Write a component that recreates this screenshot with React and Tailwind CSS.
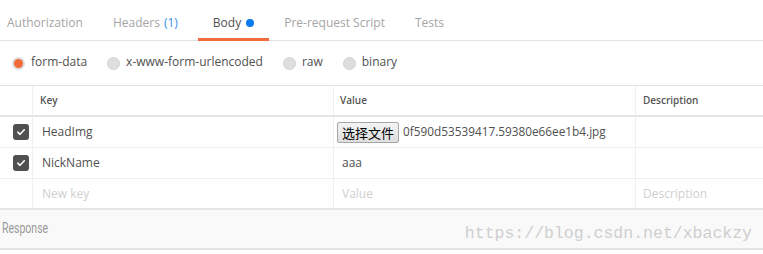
const tabs = [
  { label: 'Authorization', pad: 'pl-[7px] pr-[15px]' },
  { label: 'Headers', count: '(1)', pad: 'pl-[15px] pr-[20px]' },
  { label: 'Body', active: true, dot: true, pad: 'pl-[15px] pr-[15px]' },
  { label: 'Pre-request Script', pad: 'pl-[15px] pr-[15px]' },
  { label: 'Tests', pad: 'pl-[15px] pr-[15px]' },
]

const modes = [
  { label: 'form-data', checked: true },
  { label: 'x-www-form-urlencoded' },
  { label: 'raw' },
  { label: 'binary' },
]

// ── CHECKBOX ──────────────────────────────────────
const Check = () => (
  <span className="w-4 h-4 rounded-[3px] bg-[#505050] flex items-center justify-center">
    <svg width="10" height="10" viewBox="0 0 10 10" fill="none">
      <path d="M1.8 5.2 L4 7.3 L8.3 2.8" stroke="#fff" strokeWidth="1.6" strokeLinecap="round" strokeLinejoin="round" />
    </svg>
  </span>
)

const Radio = ({ checked }) =>
  checked ? (
    <span className="w-[13px] h-[13px] rounded-full bg-[#dcdcdc] flex items-center justify-center">
      <span className="w-[9px] h-[9px] rounded-full bg-[#f26b3a]" />
    </span>
  ) : (
    <span className="w-[13px] h-[13px] rounded-full bg-[#dedede] border border-[#d2d2d2]" />
  )

const Cell = ({ children, className = '' }) => (
  <div className={`flex items-center border-r border-[#f0f0f0] min-w-0 ${className}`}>{children}</div>
)

export default function App() {
  return (
    <div className="w-[763px] h-[254px] bg-white font-['Open_Sans',sans-serif] text-[12px] text-[#505050] overflow-hidden">

      {/* TABS */}
      <div className="flex h-[41px] border-b border-[#e2e2e2]">
        {tabs.map(t => (
          <div
            key={t.label}
            className={`flex items-center h-[41px] ${t.pad} ${
              t.active ? 'border-b-[3px] border-[#f26b3a] pt-[8px] text-[#505050]' : 'pt-[5px] text-[#a5a5a5]'
            }`}
          >
            <span className="text-[12px]">{t.label}</span>
            {t.count && <span className="ml-1 text-[12px] text-[#3a8ee6]">{t.count}</span>}
            {t.dot && <span className="ml-[5px] w-2 h-2 rounded-full bg-[#097bed]" />}
          </div>
        ))}
      </div>

      {/* BODY MODES */}
      <div className="flex items-center h-[44px] pl-[12px] gap-[20px]">
        {modes.map(m => (
          <div key={m.label} className="flex items-center gap-[6px]">
            <Radio checked={m.checked} />
            <span className="text-[12px] text-[#505050] pb-[2px]">{m.label}</span>
          </div>
        ))}
      </div>

      {/* TABLE */}
      <div className="border-t border-[#e2e2e2]">
        <div className="grid grid-cols-[33px_301px_302px_1fr] h-[31px] border-b-2 border-[#e6e6e6] font-semibold text-[10px] text-[#555]">
          <Cell />
          <Cell className="pl-[7px]">Key</Cell>
          <Cell className="pl-[6px]">Value</Cell>
          <Cell className="pl-[7px] border-r-0">Description</Cell>
        </div>

        <div className="grid grid-cols-[33px_301px_302px_1fr] h-[31px] border-b border-[#eeeeee]">
          <Cell className="pl-[13px]"><Check /></Cell>
          <Cell className="pl-[9px]">HeadImg</Cell>
          <Cell className="pl-[3px]">
            <span className="h-[21px] px-[4px] flex items-center border border-[#a6a6a6] rounded-[2px] bg-gradient-to-b from-[#f4f4f4] to-[#dedede] text-[13px] text-black font-['Noto_Sans_CJK_SC',sans-serif] leading-none">
              选择文件
            </span>
            <span className="ml-[4px] whitespace-nowrap text-[11.8px]">0f590d53539417.59380e66ee1b4.jpg</span>
          </Cell>
          <Cell className="border-r-0" />
        </div>

        <div className="grid grid-cols-[33px_301px_302px_1fr] h-[31px] border-b border-[#eeeeee]">
          <Cell className="pl-[13px]"><Check /></Cell>
          <Cell className="pl-[9px]">NickName</Cell>
          <Cell className="pl-[8px]">aaa</Cell>
          <Cell className="border-r-0" />
        </div>

        <div className="grid grid-cols-[33px_301px_302px_1fr] h-[31px] border-b-2 border-[#e6e6e6] text-[#cfcfcf]">
          <Cell />
          <Cell className="pl-[9px]">New key</Cell>
          <Cell className="pl-[8px]">Value</Cell>
          <Cell className="pl-[7px] border-r-0">Description</Cell>
        </div>
      </div>

      {/* RESPONSE */}
      <div className="flex items-center justify-between h-[40px] bg-[#f9f9f9] border-b-2 border-[#e4e4e4] pl-[2px] pr-[11px]">
        <span className="font-['Roboto',sans-serif] text-[15px] text-[#9a9a9a] inline-block scale-x-[0.7] origin-left pb-[2px]">Response</span>
        <span className="font-['Liberation_Mono',monospace] text-[16.5px] text-[#cfcfcf] pt-[10px]">https://blog.csdn.net/xbackzy</span>
      </div>
    </div>
  )
}
